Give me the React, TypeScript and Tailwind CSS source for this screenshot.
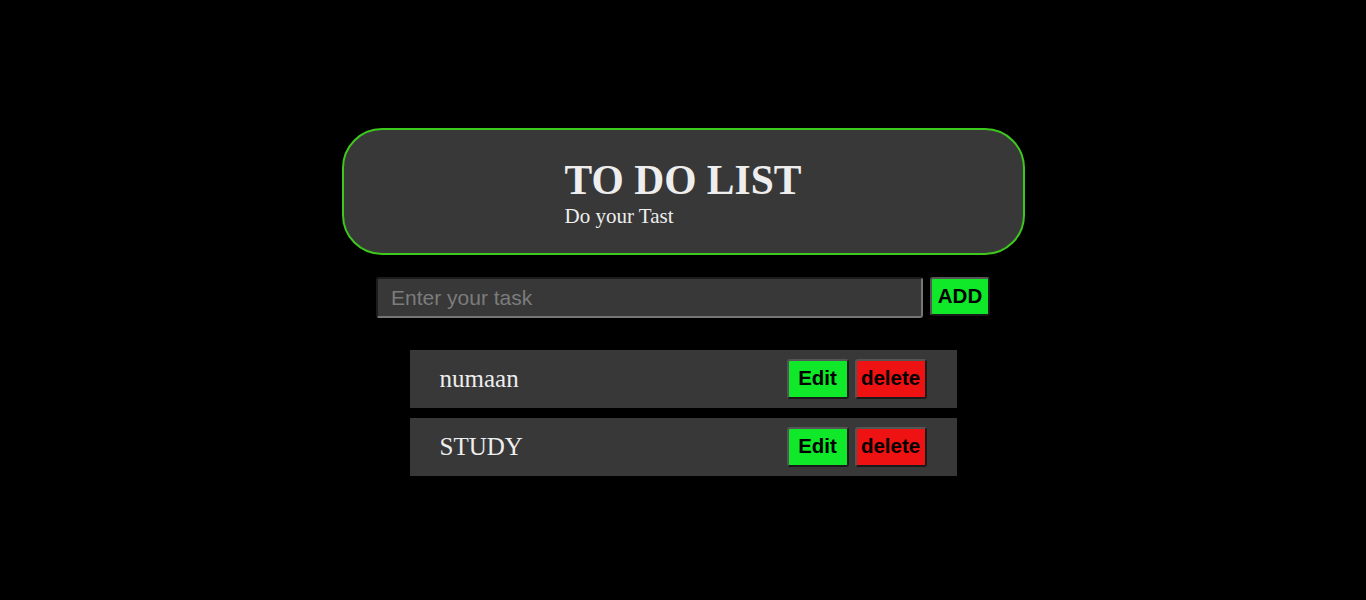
import React from "react";

const serif = { fontFamily: '"Liberation Serif", "Times New Roman", serif' } as const;
const sans = { fontFamily: '"Liberation Sans", Arial, sans-serif' } as const;

export default function App() {
  const tasks = ["numaan", "STUDY"];
  return (
    <div className="min-h-[600px] w-full bg-black flex flex-col items-center pt-[128px]" style={serif}>
      <div className="w-[683px] h-[127px] border-2 border-[#3cc81c] rounded-[40px] bg-[#383838] flex justify-center">
        <div className="pt-[29px]">
          <h1 className="text-[41.5px] leading-[42px] font-bold text-[#eeeeee] m-0">TO DO LIST</h1>
          <p className="mt-[5px] text-[21px] leading-[21px] text-[#eeeeee]">Do your Tast</p>
        </div>
      </div>

      <div className="mt-[22px] flex items-start gap-[7px]" style={sans}>
        <input
          placeholder="Enter your task"
          className="w-[547px] h-[41px] bg-[#383838] border-2 border-t-[#1c1c1c] border-l-[#1c1c1c] border-b-[#767676] border-r-[#767676] rounded-[3px] px-[13px] text-[21px] text-[#eeeeee] placeholder:text-[#7c7c7c] outline-none"
        />
        <button className="w-[60px] h-[39px] bg-[#10e82a] border-2 border-t-[#555555] border-l-[#555555] border-b-[#1a1a1a] border-r-[#1a1a1a] rounded-[3px] text-[20.5px] font-bold text-black flex items-center justify-center">
          ADD
        </button>
      </div>

      <div className="mt-[32px] flex flex-col gap-[10px]">
        {tasks.map((t) => (
          <div key={t} className="w-[547px] h-[58px] bg-[#383838] flex items-center justify-between pl-[30px] pr-[30px]">
            <span className="text-[25px] text-[#eeeeee]">{t}</span>
            <div className="flex items-center gap-[6px] mt-[-1px]" style={sans}>
              <button className="w-[62px] h-[40px] bg-[#10e82a] border-2 border-t-[#555555] border-l-[#555555] border-b-[#1a1a1a] border-r-[#1a1a1a] rounded-[3px] text-[20.5px] font-bold text-black flex items-center justify-center">
                Edit
              </button>
              <button className="w-[72px] h-[40px] bg-[#ee1212] border-2 border-t-[#555555] border-l-[#555555] border-b-[#1a1a1a] border-r-[#1a1a1a] rounded-[3px] text-[20.5px] font-bold text-black flex items-center justify-center">
                delete
              </button>
            </div>
          </div>
        ))}
      </div>
    </div>
  );
}
